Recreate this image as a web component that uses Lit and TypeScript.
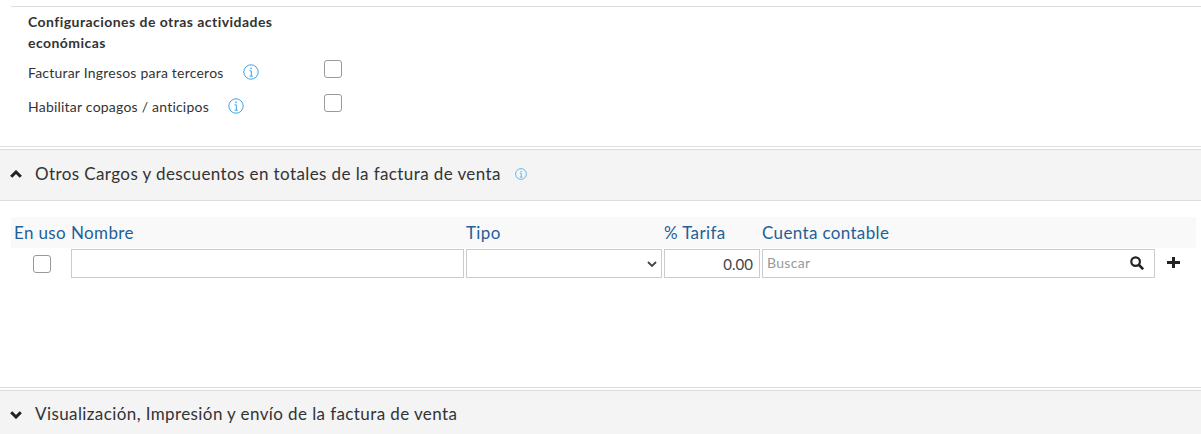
import { LitElement, html, css } from 'lit'
import { customElement } from 'lit/decorators.js'

const chevronUp = html`<svg class="chev" viewBox="0 0 12 8" aria-hidden="true"><path d="M1.200 6.800 6 2l4.800 4.800" fill="none" stroke="#222" stroke-width="3"/></svg>`
const chevronDown = html`<svg class="chev" viewBox="0 0 12 8" aria-hidden="true"><path d="M1.200 1.200 6 6l4.800-4.800" fill="none" stroke="#222" stroke-width="3"/></svg>`

const infoIcon = (size: number) => html`<svg width=${size} height=${size} viewBox="0 0 16 16" aria-hidden="true">
	<circle cx="8" cy="8" r="7.200" fill="none" stroke="#3da5e8" stroke-width="1"/>
	<path d="M6.600 6.800H8.300V12M6.500 12.200H9.800" fill="none" stroke="#3da5e8" stroke-width="1"/>
	<circle cx="8" cy="4.400" r="0.800" fill="#3da5e8"/>
</svg>`

@customElement('app-root')
export class AppRoot extends LitElement {
	static styles = css`
		:host {
			display: block;
			height: 434px;
			overflow: hidden;
			background: #fff;
			color: #333;
			font-family: Lato, 'Open Sans', sans-serif;
		}
		.top {
			margin: 6px 0 0 11px;
			border-top: 1px solid #ddd;
			padding: 4px 0 0 17px;
			height: 140px;
			box-sizing: border-box;
		}
		.title {
			width: 270px;
			font-size: 14px;
			font-weight: 700;
			letter-spacing: 0.45px;
			line-height: 21px;
		}
		.opts {
			margin-top: 2px;
			display: grid;
			grid-template-columns: 296px 18px;
			grid-auto-rows: 34px;
			align-items: center;
			font-size: 14px;
			letter-spacing: 0.22px;
		}
		.opt {
			display: flex;
			align-items: center;
			gap: 19px;
		}
		.opts .check {
			margin-bottom: 6px;
		}
		.check {
			display: block;
			width: 18px;
			height: 18px;
			box-sizing: border-box;
			border: 1px solid #999;
			border-radius: 3px;
			background: #fff;
		}
		.rule {
			border-top: 1px solid #ddd;
			height: 2px;
		}
		.section {
			display: flex;
			align-items: center;
			box-sizing: border-box;
			background: #f4f4f4;
			border-top: 1px solid #ddd;
			font-size: 17px;
			letter-spacing: 0.4px;
			padding-left: 10px;
		}
		.section.open {
			height: 52px;
			padding-bottom: 3px;
			border-bottom: 1px solid #ddd;
		}
		.section.closed {
			height: 44px;
			align-items: flex-start;
			padding-top: 12px;
		}
		.chev {
			width: 12px;
			height: 8px;
			margin-right: 13px;
			flex: none;
		}
		.section.closed .chev {
			margin-top: 8px;
		}
		.section .info {
			display: flex;
			margin-left: 14px;
		}
		.content {
			height: 186px;
			padding: 16px 5px 0 11px;
			box-sizing: border-box;
		}
		.head,
		.row {
			display: grid;
			grid-template-columns: 58px 393px 196px 96px 393px 23px;
			column-gap: 2px;
		}
		.head {
			background: #f9f9f9;
			height: 31px;
			align-items: end;
			font-size: 17px;
			letter-spacing: 0.35px;
			line-height: 22px;
			color: #1f6098;
			padding-bottom: 4px;
			box-sizing: border-box;
		}
		.head span:first-child {
			padding-left: 3px;
			white-space: nowrap;
		}
		.row {
			margin-top: 1px;
			align-items: center;
		}
		.check-cell {
			display: flex;
			padding-left: 22px;
		}
		.field {
			height: 29px;
			box-sizing: border-box;
			border: 1px solid #ccc;
			background: #fff;
			display: flex;
			align-items: center;
		}
		.number {
			justify-content: flex-end;
			padding-right: 6px;
			color: #444;
			font-size: 15px;
		}
		.select {
			justify-content: flex-end;
			padding-right: 4px;
		}
		.search {
			justify-content: space-between;
			padding: 0 10px 2px 4px;
			color: #999;
			font-size: 14px;
			letter-spacing: 0.3px;
		}
		.add {
			display: flex;
			margin-left: 10px;
			margin-bottom: 3px;
		}
	`

	render() {
		return html`
			<div class="top">
				<div class="title">Configuraciones de otras actividades económicas</div>
				<div class="opts">
					<div class="opt">
						<span>Facturar Ingresos para terceros</span>
						${infoIcon(16)}
					</div>
					<span class="check"></span>
					<div class="opt">
						<span>Habilitar copagos / anticipos</span>
						${infoIcon(16)}
					</div>
					<span class="check"></span>
				</div>
			</div>
			<div class="rule"></div>
			<div class="section open">
				${chevronUp}
				<span>Otros Cargos y descuentos en totales de la factura de venta</span>
				<span class="info">${infoIcon(12)}</span>
			</div>
			<div class="content">
				<div class="head">
					<span>En uso</span>
					<span>Nombre</span>
					<span>Tipo</span>
					<span>% Tarifa</span>
					<span>Cuenta contable</span>
				</div>
				<div class="row">
					<div class="check-cell"><span class="check"></span></div>
					<div class="field"></div>
					<div class="field select">
						<svg width="10" height="6" viewBox="0 0 10 6" aria-hidden="true"><path d="M1 1l4 4 4-4" fill="none" stroke="#444" stroke-width="1.800"/></svg>
					</div>
					<div class="field number">0.00</div>
					<div class="field search">
						<span>Buscar</span>
						<svg width="14" height="14" viewBox="0 0 14 14" aria-hidden="true"><circle cx="5.600" cy="5.600" r="4.300" fill="none" stroke="#222" stroke-width="2.200"/><path d="M9 9l4.200 4.200" stroke="#222" stroke-width="2.600"/></svg>
					</div>
					<div class="add">
						<svg width="13" height="11" viewBox="0 0 13 11" aria-hidden="true"><path d="M6.500 0v11M0 5.500h13" stroke="#222" stroke-width="3"/></svg>
					</div>
				</div>
			</div>
			<div class="rule"></div>
			<div class="section closed">
				${chevronDown}
				<span>Visualización, Impresión y envío de la factura de venta</span>
			</div>
		`
	}
}
